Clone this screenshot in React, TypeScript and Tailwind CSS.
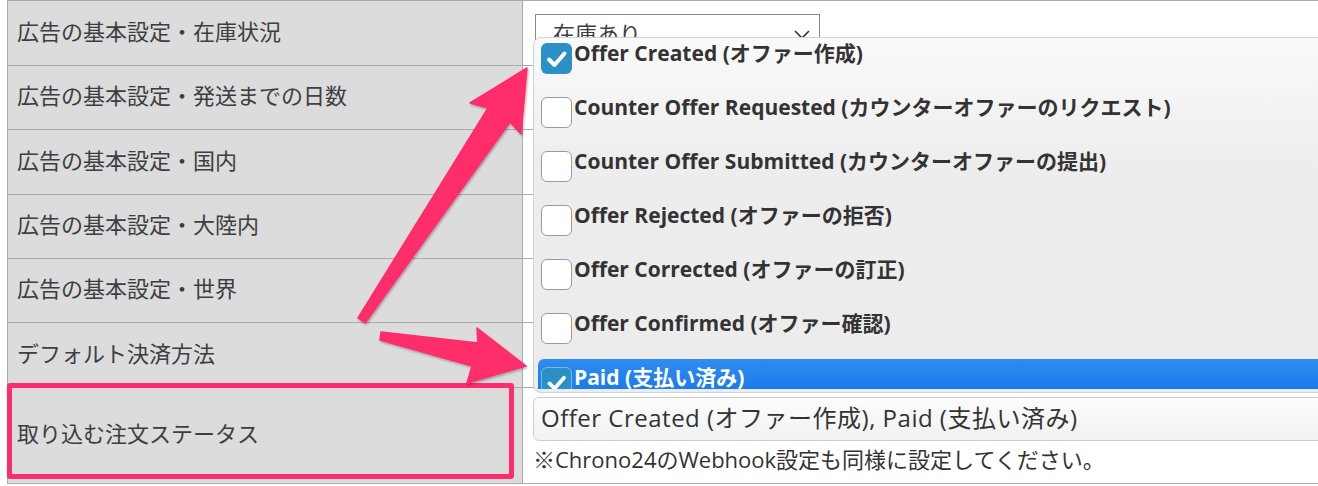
import React from "react";

const rows = [
  { label: "広告の基本設定・在庫状況", h: "h-[65px]" },
  { label: "広告の基本設定・発送までの日数", h: "h-[64px]" },
  { label: "広告の基本設定・国内", h: "h-[65px]" },
  { label: "広告の基本設定・大陸内", h: "h-[64px]" },
  { label: "広告の基本設定・世界", h: "h-[64px]" },
  { label: "デフォルト決済方法", h: "h-[65px]" },
];

const options = [
  { label: "Offer Created (オファー作成)", checked: true },
  { label: "Counter Offer Requested (カウンターオファーのリクエスト)", checked: false },
  { label: "Counter Offer Submitted (カウンターオファーの提出)", checked: false },
  { label: "Offer Rejected (オファーの拒否)", checked: false },
  { label: "Offer Corrected (オファーの訂正)", checked: false },
  { label: "Offer Confirmed (オファー確認)", checked: false },
  { label: "Paid (支払い済み)", checked: true, active: true },
];

function Checkbox({ checked, active }: { checked: boolean; active?: boolean }) {
  if (checked) {
    return (
      <span
        className={`mt-[2px] flex h-[31px] w-[31px] shrink-0 items-center justify-center rounded-[6px] bg-[#2b90c5] ${
          active ? "border border-[#7fb6dc]" : ""
        }`}
      >
        <svg width="31" height="31" viewBox="0 0 31 31">
          <path
            d="M8 16.5 L13.5 22 L23.5 10.5"
            fill="none"
            stroke="#fff"
            strokeWidth="4"
            strokeLinecap="round"
            strokeLinejoin="round"
          />
        </svg>
      </span>
    );
  }
  return (
    <span className="mt-[2px] block h-[31px] w-[31px] shrink-0 rounded-[6px] border border-[#9a9a9a] bg-white" />
  );
}

export default function App() {
  return (
    <div className="relative h-[486px] w-[1318px] overflow-hidden bg-white font-['Open_Sans','Noto_Sans_CJK_JP',sans-serif] text-[#3b3e43]">
      <div className="ml-[7px] w-[1500px] border-l border-t border-[#ababab]">
        {rows.map((r, i) => (
          <div key={r.label} className={`flex ${r.h} border-b border-[#ababab]`}>
            <div className="flex w-[515px] shrink-0 items-center border-r border-[#ababab] bg-[#dcdcdc] pb-[4px] pl-[9px] text-[22px]">
              {r.label}
            </div>
            <div className="flex-1 pl-[12px] pt-[13px]">
              {i === 0 && (
                <div className="flex h-[40px] w-[285px] items-start justify-between border border-[#888] bg-white pl-[17px] pr-[8px] pt-[2px] text-[22px] leading-[32px]">
                  <span>在庫あり</span>
                  <svg width="18" height="12" viewBox="0 0 18 12" className="mt-[12px]">
                    <path d="M2 2 L9 9 L16 2" fill="none" stroke="#333" strokeWidth="1.6" />
                  </svg>
                </div>
              )}
            </div>
          </div>
        ))}
        <div className="flex h-[96px] border-b border-[#ababab]">
          <div className="flex w-[515px] shrink-0 items-center border-r border-[#ababab] bg-[#dcdcdc] pb-[4px] pl-[9px] text-[22px]">
            取り込む注文ステータス
          </div>
          <div className="flex-1 pl-[10px] pt-[9px]">
            <div className="flex h-[44px] w-[900px] items-center rounded-[6px] border border-[#cfcfcf] bg-[linear-gradient(to_bottom,#fcfcfc,#f1f1f1)] pb-[2px] pl-[7px] text-[24px] tracking-[0.5px] text-[#333]">
              Offer Created (オファー作成), Paid (支払い済み)
            </div>
            <div className="mt-[4px] text-[22px] leading-[28px] text-[#333]">
              ※Chrono24のWebhook設定も同様に設定してください。
            </div>
          </div>
        </div>
      </div>

      <div className="absolute left-[533px] top-[37px] h-[356px] w-[900px] rounded-l-[8px] border border-[#d3d3d3] bg-[linear-gradient(to_bottom,#fafafa_0px,#ededed_130px,#ececec_100%)] pb-[3px]">
        <div className="h-full overflow-hidden">
          <div className="-mt-[3px] pl-[4px]">
            {options.map((o) => (
              <div
                key={o.label}
                className={`flex h-[54px] items-start gap-[2px] pl-[3px] pt-[6px] ${
                  o.active
                    ? "rounded-l-[6px] bg-[linear-gradient(to_bottom,#2f8cf0,#0a6de6)] text-white"
                    : "text-[#333]"
                }`}
              >
                <Checkbox checked={o.checked} active={o.active} />
                <span className="whitespace-nowrap text-[21px] font-bold leading-[24px]">{o.label}</span>
              </div>
            ))}
          </div>
        </div>
      </div>

      <div className="absolute left-[7px] top-[383px] h-[96px] w-[507px] rounded-[3px] border-[5px] border-[#ff2d6b]" />

      <svg className="pointer-events-none absolute left-0 top-0" width="1318" height="486">
        <defs>
          <filter id="sh" x="-20%" y="-20%" width="140%" height="140%">
            <feDropShadow dx="1" dy="1.5" stdDeviation="1" floodColor="#000" floodOpacity="0.3" />
          </filter>
        </defs>
        <g fill="#ff2d6b" stroke="#ff2d6b" strokeWidth="1.5" strokeLinejoin="round" filter="url(#sh)">
          <polygon points="527,68 521,134 510,122 365,323 358,318 488,108 470,103" />
          <polygon points="526,366 467,383 472,366 380,340 381,332 478,343 477,328" />
        </g>
      </svg>
    </div>
  );
}
